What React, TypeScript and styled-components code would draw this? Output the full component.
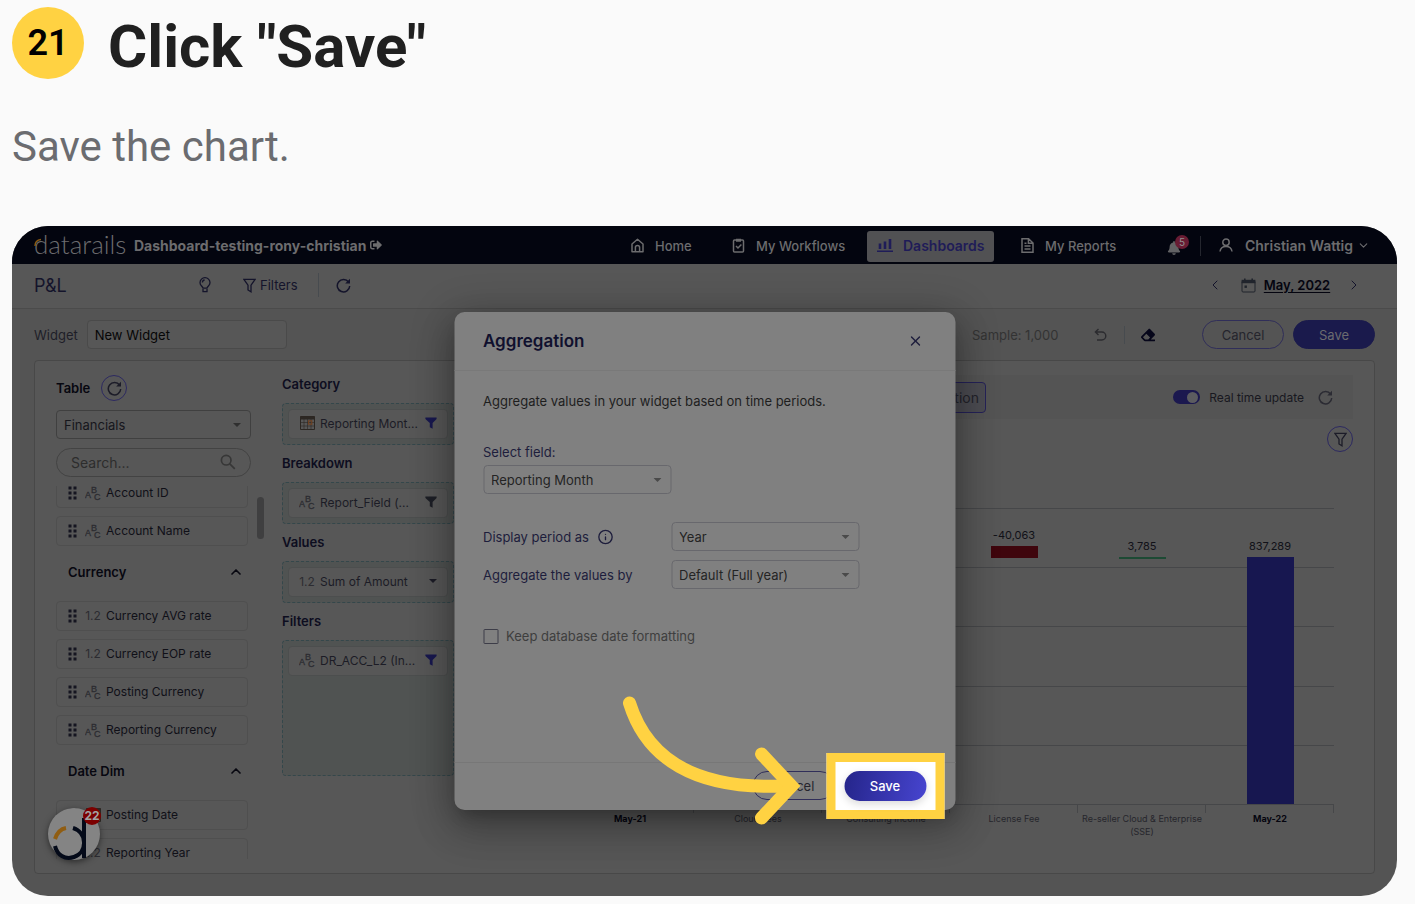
import React from "react";
import styled, { createGlobalStyle } from "styled-components";
import { FaSignOutAlt, FaBell, FaEraser } from "react-icons/fa";
import { ChevronDown, ChevronLeft, ChevronRight, ChevronUp, Info, X } from "lucide-react";

const yellow = "#ffd242";
const ink = "#14142b";
const muted = "#2b2b33";
const violet = "#18184f";

const GlobalStyle = createGlobalStyle`
  * { box-sizing: border-box; }
  body { margin: 0; background: #fafafa; font-family: Inter, "Liberation Sans", sans-serif; }
  button, input, select { font-family: inherit; margin: 0; }
  svg { display: block; flex: none; }
`;

/* ---------- article ---------- */

const Page = styled.main`
  padding: 7px 18px 8px 12px;
`;

const StepHeader = styled.header`
  display: flex;
  align-items: center;
  gap: 24px;
  height: 72px;
  font-family: Roboto, sans-serif;
`;

const StepNumber = styled.span`
  display: flex;
  align-items: center;
  justify-content: center;
  width: 72px;
  height: 72px;
  border-radius: 50%;
  background: ${yellow};
  color: #000;
  font-size: 36px;
  font-weight: 600;
`;

const StepTitle = styled.h1`
  margin: 8px 0 0;
  font-size: 60px;
  line-height: 72px;
  font-weight: 700;
  color: #202020;
`;

const StepText = styled.p`
  margin: 44px 0 55px;
  font-family: Roboto, sans-serif;
  font-size: 42px;
  line-height: 48px;
  color: #6b6c70;
`;

const Frame = styled.section`
  position: relative;
  overflow: hidden;
  border-radius: 36px;
  background: #545454;
`;

/* ---------- navigation ---------- */

const NavBar = styled.nav`
  display: flex;
  align-items: center;
  height: 38px;
  padding: 2px 27px 0 22px;
  background: #03050f;
  color: #6c6c6e;
`;

const Brand = styled.span`
  position: relative;
  width: 100px;
  padding-bottom: 5px;
  font-family: Lato, sans-serif;
  font-size: 26px;
  font-weight: 300;
  line-height: 30px;
`;

const BrandArc = styled.svg`
  position: absolute;
  left: 0;
  top: 9px;
`;

const Account = styled.a`
  display: flex;
  align-items: center;
  gap: 4px;
  margin-right: auto;
  padding-bottom: 2px;
  color: inherit;
  font-size: 14px;
  font-weight: 700;
  text-decoration: none;
  white-space: nowrap;
`;

const NavLink = styled.a<{ $width: number; $active?: boolean; $inset?: number }>`
  display: flex;
  align-items: center;
  gap: 10px;
  width: ${(p) => p.$width}px;
  height: 31px;
  padding: 0 0 1px ${(p) => p.$inset ?? 10}px;
  border-radius: 3px;
  font-size: ${(p) => (p.$active ? 14 : 13)}px;
  font-weight: ${(p) => (p.$active ? 600 : 500)};
  color: ${(p) => (p.$active ? "#1f1c58" : "inherit")};
  background: ${(p) => (p.$active ? "#515153" : "transparent")};
  text-decoration: none;
  white-space: nowrap;
`;

const BellButton = styled.button`
  position: relative;
  width: 34px;
  height: 20px;
  padding: 3px 0 0;
  border: 0;
  border-right: 1px solid #24262e;
  background: none;
  color: #626264;
`;

const BellBadge = styled.span`
  position: absolute;
  left: 8px;
  top: -1px;
  width: 14px;
  height: 14px;
  border-radius: 50%;
  background: #681c33;
  color: #909090;
  font-size: 10px;
  line-height: 14px;
  text-align: center;
`;

const UserButton = styled.button`
  display: flex;
  align-items: center;
  width: 169px;
  padding: 0 0 2px 18px;
  border: 0;
  background: none;
  color: inherit;
  font-size: 14px;
  font-weight: 600;
  white-space: nowrap;

  span { flex: 1; padding-left: 8px; text-align: center; }
`;

/* ---------- sub bar ---------- */

const SubBar = styled.div`
  display: flex;
  align-items: center;
  height: 45px;
  padding: 0 35px 2px 22px;
  border-bottom: 1px solid #4b4b4b;
  background: #575757;
  color: ${ink};
`;

const PageName = styled.h2`
  width: 165px;
  margin: 0;
  font-size: 18px;
  font-weight: 400;
`;

const PlainButton = styled.button`
  display: flex;
  align-items: center;
  gap: 4px;
  padding: 0;
  border: 0;
  background: none;
  color: inherit;
  font-size: 13px;
  white-space: nowrap;
`;

const FilterButton = styled(PlainButton)`
  margin: 0 19px 0 32px;
  width: 56px;
`;

const Divider = styled.span<{ $gap: number; $tall?: boolean }>`
  width: 1px;
  height: ${(p) => (p.$tall ? 24 : 18)}px;
  margin-right: ${(p) => p.$gap}px;
  background: #474b4f;
`;

const MonthPicker = styled.div`
  display: flex;
  align-items: center;
  margin-left: auto;
`;

const MonthIcon = styled.span`
  margin-left: 18px;
`;

const MonthLabel = styled.button`
  width: 82px;
  padding: 0;
  border: 0;
  background: none;
  color: #04040f;
  font-size: 13px;
  font-weight: 600;
  text-decoration: underline;
  text-underline-offset: 2px;
  white-space: nowrap;
`;

const NextMonth = styled(PlainButton)`
  margin-left: 8px;
`;

/* ---------- widget bar ---------- */

const WidgetBar = styled.div`
  display: flex;
  align-items: center;
  height: 51px;
  padding: 0 22px;
  color: #1e1e28;
  font-size: 13px;
`;

const WidgetName = styled.label`
  display: flex;
  align-items: center;
  gap: 9px;
  margin-right: auto;
`;

const TextInput = styled.input`
  width: 200px;
  height: 29px;
  padding: 0 7px;
  border: 1px solid #4a4a4a;
  border-radius: 4px;
  background: #575757;
  color: #060606;
  font-size: 13px;
`;

const Sample = styled.span`
  width: 122px;
  color: #333;
  font-size: 13px;
`;

const UndoButton = styled(PlainButton)`
  margin-right: 17px;
`;

const PillButton = styled.button<{ $filled?: boolean }>`
  width: 82px;
  height: 29px;
  padding: 0;
  border: 1px solid ${(p) => (p.$filled ? "#1a1a4c" : "#302e59")};
  border-radius: 15px;
  background: ${(p) => (p.$filled ? "#1a1a4c" : "transparent")};
  color: ${(p) => (p.$filled ? "#6b6b6f" : "#25252d")};
  font-size: 13px;
`;

const ToolbarActions = styled.div`
  display: flex;
  gap: 9px;
  margin-left: 47px;
`;

/* ---------- editor ---------- */

const Editor = styled.div`
  display: flex;
  height: 514px;
  margin: 0 22px 22px;
  padding: 14px 21px;
  border: 1px solid #484848;
  border-radius: 4px;
  background: #575757;
`;

const FieldColumn = styled.aside`
  display: flex;
  flex-direction: column;
  gap: 9px;
  width: 226px;
`;

const ColumnHead = styled.div`
  display: flex;
  align-items: center;
  gap: 11px;
  height: 26px;
  color: #070710;
  font-size: 13px;
  font-weight: 600;
`;

const RoundButton = styled.button`
  display: flex;
  align-items: center;
  justify-content: center;
  width: 26px;
  height: 26px;
  padding: 0;
  border: 1px solid #2c2960;
  border-radius: 50%;
  background: none;
  color: #1c1c28;
`;

const SelectBox = styled.span<{ $width: number; $light?: boolean }>`
  display: grid;
  align-items: center;
  width: ${(p) => p.$width}px;
  height: 29px;
  color: ${(p) => (p.$light ? "#4a4a4a" : "#2f2f2f")};

  select, svg { grid-area: 1 / 1; }
  svg { justify-self: end; margin-right: 10px; pointer-events: none; }
  select {
    appearance: none;
    width: 100%;
    height: 29px;
    padding: 0 7px;
    border: 1px solid ${(p) => (p.$light ? "#68686d" : "#404040")};
    border-radius: 4px;
    background: transparent;
    color: ${(p) => (p.$light ? "#242424" : "#16161c")};
    font-size: 13px;
  }
`;

const SearchBox = styled.label`
  display: flex;
  align-items: center;
  width: 195px;
  height: 29px;
  padding: 0 14px;
  border: 1px solid #434343;
  border-radius: 15px;
  color: #373737;

  input {
    flex: 1;
    min-width: 0;
    padding: 0;
    border: 0;
    outline: 0;
    background: none;
    color: #222;
    font-size: 14px;
  }
  input::placeholder { color: #2d2d2d; opacity: 1; }
`;

const FieldScroller = styled.div`
  display: flex;
  align-items: flex-start;
  gap: 9px;
  height: 374px;
  overflow: hidden;
`;

const FieldList = styled.div`
  width: 192px;
  margin-top: -8px;
`;

const ScrollThumb = styled.span`
  width: 7px;
  height: 42px;
  margin-top: 11px;
  border-radius: 4px;
  background: #3f3f40;
`;

const FieldGroup = styled.ul`
  display: flex;
  flex-direction: column;
  gap: 8px;
  margin: 0;
  padding: 0;
  list-style: none;
`;

const FieldItem = styled.li`
  display: flex;
  align-items: center;
  height: 30px;
  padding-left: 11px;
  border: 1px solid #4f4f4f;
  border-radius: 4px;
  color: #101018;
  font-size: 12px;
  line-height: 14px;
  white-space: nowrap;
`;

const GroupHeader = styled.button`
  display: flex;
  align-items: center;
  justify-content: space-between;
  width: 100%;
  height: 55px;
  padding: 0 4px 3px 12px;
  border: 0;
  background: none;
  color: #070710;
  font-size: 13px;
  font-weight: 600;
`;

const TypeSlot = styled.span`
  display: flex;
  justify-content: center;
  width: 16px;
  margin: 0 5px 0 8px;
  color: #2c2c31;
`;

const ZoneColumn = styled.div`
  width: 172px;
  margin-top: -9px;
`;

const ZoneTitle = styled.h3`
  height: 37px;
  margin: 0;
  color: #0d0d1f;
  font-size: 13px;
  font-weight: 600;
  line-height: 37px;
`;

const DropZone = styled.div<{ $tall?: boolean }>`
  height: ${(p) => (p.$tall ? 136 : 42)}px;
  padding: 5px;
  border: 1px dashed #34474b;
  border-radius: 4px;
  background: #505352;
`;

const Chip = styled.div`
  display: flex;
  align-items: center;
  height: 30px;
  padding: 0 10px 2px 2px;
  border: 1px solid #4c4e4e;
  border-radius: 4px;
  background: #575757;
  color: #1c1c26;
  font-size: 12px;
  white-space: nowrap;

  > :last-child { margin-left: auto; }
`;

const ChartColumn = styled.div`
  flex: 1;
  min-width: 0;
  margin-left: 22px;
`;

const ChartBar = styled.div`
  display: flex;
  align-items: center;
  height: 44px;
  padding-right: 20px;
  background: #545454;
  color: ${muted};
`;

const AggregationButton = styled.button`
  width: 110px;
  height: 31px;
  margin: 0 auto 0 400px;
  border: 1px solid #252258;
  border-radius: 4px;
  background: #4c4c52;
  color: #23232b;
  font-size: 14px;
  text-align: right;
`;

const SwitchLabel = styled.label`
  display: flex;
  align-items: center;
  gap: 9px;
  margin-right: 14px;
  color: #181820;
  font-size: 12px;

  input {
    appearance: none;
    display: flex;
    align-items: center;
    justify-content: flex-end;
    width: 27px;
    height: 14px;
    padding: 0 2px;
    border-radius: 7px;
    background: #1b184f;
  }
  input::before {
    content: "";
    width: 11px;
    height: 11px;
    border-radius: 50%;
    background: #5c5c60;
  }
`;

const ChartFilter = styled.div`
  display: flex;
  justify-content: flex-end;
  margin: 7px 0 56px;
`;

const Plot = styled.div`
  display: grid;
  height: 297px;
  margin-right: 19px;
`;

const GridLines = styled.div`
  grid-area: 1 / 1;
  display: flex;
  flex-direction: column;
  justify-content: space-between;

  span { height: 1px; background: #464749; }
`;

const Bars = styled.div`
  grid-area: 1 / 1;
  display: grid;
  grid-template-columns: repeat(6, 1fr);
  padding-left: 90px;
`;

const BarSlot = styled.div<{ $base: number }>`
  display: flex;
  flex-direction: column;
  align-items: center;
  justify-content: flex-end;
  gap: 4px;
  padding-bottom: ${(p) => p.$base}px;
  color: #111118;
  font-size: 11px;
  line-height: 14px;
`;

const Bar = styled.span<{ $height: number; $color: string }>`
  width: 47px;
  height: ${(p) => p.$height}px;
  background: ${(p) => p.$color};
`;

const AxisLabels = styled.div`
  display: grid;
  grid-template-columns: repeat(6, 1fr);
  margin-right: 19px;
  padding-left: 90px;
`;

const AxisLabel = styled.span<{ $strong?: boolean }>`
  height: 34px;
  padding-top: 7px;
  background: linear-gradient(#464749, #464749) right top / 1px 8px no-repeat;
  color: ${(p) => (p.$strong ? "#05050f" : "#26262c")};
  font-size: 9px;
  font-weight: ${(p) => (p.$strong ? 700 : 400)};
  line-height: 13px;
  text-align: center;
`;

/* ---------- dialog ---------- */

const Dialog = styled.div`
  position: absolute;
  left: 50%;
  top: 86px;
  width: 501px;
  transform: translateX(-50%);
  border-radius: 10px;
  background: #808080;
  box-shadow: 0 11px 15px -7px rgba(0, 0, 0, 0.2), 0 20px 38px 3px rgba(0, 0, 0, 0.16),
    0 6px 40px 4px rgba(0, 0, 0, 0.24);
  color: #1d1d3c;
  font-size: 13px;
`;

const DialogHead = styled.header`
  display: flex;
  align-items: center;
  justify-content: space-between;
  height: 59px;
  padding: 0 32px 0 29px;
  border-bottom: 1px solid #797979;

  h2 { margin: 0; font-size: 17px; font-weight: 600; color: #10102e; }
`;

const DialogBody = styled.div`
  min-height: 391px;
  padding: 20px 29px;

  p { margin: 0 0 32px; color: #1e1e1e; line-height: 20px; }
`;

const StackedField = styled.label`
  display: flex;
  flex-direction: column;
  gap: 4px;
  margin-bottom: 28px;
  line-height: 18px;
`;

const InlineField = styled.label`
  display: flex;
  align-items: center;
  height: 29px;
  margin-bottom: 9px;

  > span:first-child {
    display: flex;
    align-items: center;
    gap: 9px;
    width: 188px;
  }
`;

const CheckField = styled.label`
  display: flex;
  align-items: center;
  gap: 8px;
  margin-top: 38px;
  color: #3e3e3e;
  line-height: 18px;

  input {
    appearance: none;
    width: 15px;
    height: 15px;
    border: 1px solid #3d3d48;
    border-radius: 1px;
  }
`;

const DialogFoot = styled.footer`
  display: flex;
  align-items: center;
  justify-content: flex-end;
  height: 48px;
  padding: 0 11px 2px 0;
  border-top: 1px solid #777;
`;

const Highlight = styled.span`
  z-index: 1;
  margin: -9px 0 -9px -8px;
  padding: 9px;
  border: 9px solid ${yellow};
  background: #fff;
`;

const PrimaryButton = styled.button`
  display: block;
  width: 82px;
  height: 30px;
  padding: 0;
  border: 0;
  border-radius: 15px;
  background: linear-gradient(100deg, #25258a, #4745d0);
  box-shadow: 0 3px 8px rgba(0, 0, 0, 0.15);
  color: #fff;
  font-size: 13px;
  font-weight: 500;
`;

const Arrow = styled.svg`
  position: absolute;
  left: 165px;
  top: 380px;
  z-index: 2;
  pointer-events: none;
`;

/* ---------- chat launcher ---------- */

const ChatButton = styled.button`
  position: absolute;
  left: 36px;
  bottom: 36px;
  width: 52px;
  height: 52px;
  padding: 0;
  border: 0;
  border-radius: 50%;
  background: #848484;
  box-shadow: 0 2px 6px rgba(0, 0, 0, 0.5);
`;

const ChatBadge = styled.span`
  position: absolute;
  right: -1px;
  top: -1px;
  width: 18px;
  height: 18px;
  border-radius: 50%;
  background: #7c0000;
  color: #a3a3a3;
  font-size: 12px;
  font-weight: 700;
  line-height: 18px;
  text-align: center;
`;

/* ---------- icons ---------- */

const line = { fill: "none", stroke: "currentColor", strokeWidth: 1.5 } as const;

const HomeIcon = () => (
  <svg width="15" height="15" viewBox="0 0 15 15" {...line}>
    <path d="M2 6 7.5 1.3 13 6v7.7H2zM5.4 13.5V9.6a2.1 2.1 0 0 1 4.2 0v3.9" strokeLinejoin="round" />
  </svg>
);

const WorkflowIcon = () => (
  <svg width="15" height="15" viewBox="0 0 15 15" {...line}>
    <rect x="2.5" y="2" width="10" height="12" rx="1" />
    <path d="M5 2.2h5" strokeWidth="3" />
    <path d="m5 8 2 2 3.4-3.6" />
  </svg>
);

const DashboardIcon = () => (
  <svg width="16" height="15" viewBox="0 0 16 15" {...line} strokeWidth="2.6">
    <path d="M3 5.5V11M8 3.5V11M13 1V11" />
    <path d="M0 13.2h16" strokeWidth="1.6" />
  </svg>
);

const ReportIcon = () => (
  <svg width="15" height="15" viewBox="0 0 15 15" {...line}>
    <path d="M2 .8h6.6L13 5v9.2H2zM8.4 1v4.2H13M4.5 8h6M4.5 11h6M4.5 5.2h2" />
  </svg>
);

const UserIcon = () => (
  <svg width="14" height="14" viewBox="0 0 14 14" {...line}>
    <circle cx="7" cy="4.2" r="3.2" />
    <path d="M1 13.5c.4-3.2 2.4-5 6-5s5.6 1.8 6 5" />
  </svg>
);

const BulbIcon = () => (
  <svg width="12" height="16" viewBox="0 0 12 16" {...line}>
    <path d="M4 11.2C4 9.5 1 8.6 1 5.7a5 5 0 0 1 10 0c0 2.9-3 3.8-3 5.5zM4 12v2.7h4V12M3.4 5.5C3.4 4.2 4.3 3.2 5.6 3" strokeWidth="1.3" />
  </svg>
);

const FunnelIcon = () => (
  <svg width="13" height="15" viewBox="0 0 13 15" {...line} strokeWidth="1.3">
    <path d="M.9 1.3h11.2L8 7.2v6.6L5 12V7.2z" />
  </svg>
);

const SolidFunnel = ({ color }: { color: string }) => (
  <svg width="12" height="12" viewBox="0 0 12 12" fill={color}>
    <path d="M.4.5h11.2v1.6L7.6 6v5.7L4.8 10.3V6L.4 2.1z" />
  </svg>
);

const ReloadIcon = () => (
  <svg width="15" height="15" viewBox="0 0 15 15" {...line}>
    <path d="M12.6 4.2A6.2 6.2 0 1 0 13.7 8" />
    <path d="M14 .8v4.8H9.2z" fill="currentColor" stroke="none" />
  </svg>
);

const CalendarIcon = () => (
  <svg width="15" height="15" viewBox="0 0 15 15" fill="none" stroke="#20242c">
    <rect x="1" y="3" width="13" height="11" rx="1" />
    <path d="M.6 3.5h13.8" strokeWidth="3.4" />
    <path d="M3.8.4v3M11.2.4v3" strokeWidth="1.6" />
    <rect x="3.5" y="7.5" width="2.4" height="2.4" fill="#20242c" stroke="none" />
  </svg>
);

const UndoIcon = () => (
  <svg width="13" height="13" viewBox="0 0 13 13" {...line} strokeWidth="1.4" color="#2b2b2f">
    <path d="M4.5 1 1.4 4l3.1 3M1.6 4h6.2a4 4 0 0 1 0 8H3" />
  </svg>
);

const SearchIcon = () => (
  <svg width="16" height="16" viewBox="0 0 16 16" {...line} strokeWidth="1.7">
    <circle cx="6.2" cy="6.2" r="4.8" />
    <path d="m9.8 9.8 5 5" />
  </svg>
);

const CaretIcon = () => (
  <svg width="8" height="4" viewBox="0 0 8 4" fill="currentColor">
    <path d="M0 0h8L4 4z" />
  </svg>
);

const DragIcon = () => (
  <svg width="9" height="14" viewBox="0 0 9 14" fill="#151520">
    {[0.5, 5.5, 10.5].map((y) => (
      <path key={y} d={`M.5 ${y}h3v3h-3zM5.5 ${y}h3v3h-3z`} />
    ))}
  </svg>
);

const TextTypeIcon = () => (
  <svg width="16" height="20" viewBox="0 -2 16 20" fill="currentColor" stroke="currentColor" strokeWidth=".3" fontFamily="Liberation Sans, sans-serif" fontSize="9">
    <text x="0" y="13">A</text>
    <text x="6" y="8">B</text>
    <text x="9" y="15">C</text>
  </svg>
);

const DateTypeIcon = () => (
  <svg width="15" height="14" viewBox="0 0 15 14" fill="none" stroke="#2c2723">
    <path d="M.5.5h14v13H.5z" />
    <path d="M.5 2h14" strokeWidth="3" />
    <path d="M4 3v10M7.5 3v10M11 3v10M1 6.5h13M1 10h13" strokeWidth=".6" />
    <rect x="8.6" y="4.8" width="3.2" height="3.4" stroke="#74401d" />
  </svg>
);

const NumberType = styled.span`
  font-size: 12px;
`;

const TypeIcon = ({ kind }: { kind: string }) => (
  <TypeSlot>
    {kind === "text" ? <TextTypeIcon /> : kind === "date" ? <DateTypeIcon /> : <NumberType>1.2</NumberType>}
  </TypeSlot>
);

const ChatLogo = () => (
  <svg width="52" height="52" viewBox="0 0 52 52" fill="none" strokeWidth="4">
    <path d="M7 31C9 25 12 21 18 20" stroke="#905d12" />
    <path d="M25 20C39 24 40 44 26 49C17 52 9 47 7 38" stroke="#040a19" />
    <path d="M36 10v40" stroke="#040a19" />
  </svg>
);

/* ---------- content ---------- */

const groups = [
  { title: "", fields: [["text", "Account ID"], ["text", "Account Name"]] },
  {
    title: "Currency",
    fields: [
      ["number", "Currency AVG rate"],
      ["number", "Currency EOP rate"],
      ["text", "Posting Currency"],
      ["text", "Reporting Currency"],
    ],
  },
  { title: "Date Dim", fields: [["date", "Posting Date"], ["number", "Reporting Year"]] },
];

const zones = [
  { title: "Category", kind: "date", text: "Reporting Mont...", end: <SolidFunnel color={violet} /> },
  { title: "Breakdown", kind: "text", text: "Report_Field (...", end: <SolidFunnel color="#1d1f26" /> },
  { title: "Values", kind: "number", text: "Sum of Amount", end: <CaretIcon /> },
  { title: "Filters", kind: "text", text: "DR_ACC_L2 (In...", end: <SolidFunnel color={violet} />, tall: true },
];

const series = [
  { name: "May-21", strong: true },
  { name: "Cloud Fees" },
  { name: "Consulting Income" },
  { name: "License Fee", value: "-40,063", height: 12, base: 247, color: "#3f060d" },
  { name: "Re-seller Cloud & Enterprise (SSE)", value: "3,785", height: 2, base: 246, color: "#1d4a34" },
  { name: "May-22", strong: true, value: "837,289", height: 247, base: 1, color: "#171750" },
];

const Picker = ({ value, width, light }: { value: string; width: number; light?: boolean }) => (
  <SelectBox $width={width} $light={light}>
    <select defaultValue={value} aria-label={value}>
      <option>{value}</option>
    </select>
    <CaretIcon />
  </SelectBox>
);

const Navigation = () => (
  <NavBar>
    <Brand>
      datarails
      <BrandArc width="8" height="10" viewBox="0 0 8 10" fill="none" stroke="#8a5a12" strokeWidth="1.5">
        <path d="M1 8C1 4 3 2 7 1.5" />
      </BrandArc>
    </Brand>
    <Account href="#account">
      Dashboard-testing-rony-christian <FaSignOutAlt size={12} />
    </Account>
    <NavLink href="#home" $width={101}><HomeIcon />Home</NavLink>
    <NavLink href="#workflows" $width={146}><WorkflowIcon />My Workflows</NavLink>
    <NavLink href="#dashboards" $width={127} $active><DashboardIcon />Dashboards</NavLink>
    <NavLink href="#reports" $width={173} $inset={26}><ReportIcon />My Reports</NavLink>
    <BellButton aria-label="Notifications">
      <FaBell size={14} />
      <BellBadge>5</BellBadge>
    </BellButton>
    <UserButton>
      <UserIcon />
      <span>Christian Wattig</span>
      <ChevronDown size={13} />
    </UserButton>
  </NavBar>
);

const FieldPanel = () => (
  <FieldColumn>
    <ColumnHead>
      Table
      <RoundButton aria-label="Reload table"><ReloadIcon /></RoundButton>
    </ColumnHead>
    <Picker value="Financials" width={195} />
    <SearchBox>
      <input placeholder="Search..." aria-label="Search fields" />
      <SearchIcon />
    </SearchBox>
    <FieldScroller>
      <FieldList>
        {groups.map((group) => (
          <div key={group.title}>
            {group.title && (
              <GroupHeader>
                {group.title}
                <ChevronUp size={16} strokeWidth={2.5} />
              </GroupHeader>
            )}
            <FieldGroup>
              {group.fields.map(([kind, name]) => (
                <FieldItem key={name}>
                  <DragIcon />
                  <TypeIcon kind={kind} />
                  {name}
                </FieldItem>
              ))}
            </FieldGroup>
          </div>
        ))}
      </FieldList>
      <ScrollThumb />
    </FieldScroller>
  </FieldColumn>
);

const Chart = () => (
  <ChartColumn>
    <ChartBar>
      <AggregationButton>Aggregation</AggregationButton>
      <SwitchLabel>
        <input type="checkbox" role="switch" defaultChecked />
        Real time update
      </SwitchLabel>
      <PlainButton aria-label="Reload chart"><ReloadIcon /></PlainButton>
    </ChartBar>
    <ChartFilter>
      <RoundButton aria-label="Filter chart"><FunnelIcon /></RoundButton>
    </ChartFilter>
    <Plot>
      <GridLines>
        {[5, 4, 3, 2, 1, 0].map((n) => <span key={n} />)}
      </GridLines>
      <Bars>
        {series.map((s) => (
          <BarSlot key={s.name} $base={s.base ?? 0}>
            {s.value}
            {s.height && <Bar $height={s.height} $color={s.color} />}
          </BarSlot>
        ))}
      </Bars>
    </Plot>
    <AxisLabels>
      {series.map((s) => <AxisLabel key={s.name} $strong={s.strong}>{s.name}</AxisLabel>)}
    </AxisLabels>
  </ChartColumn>
);

const AggregationDialog = () => (
  <Dialog role="dialog" aria-label="Aggregation">
    <DialogHead>
      <h2>Aggregation</h2>
      <PlainButton aria-label="Close"><X size={16} strokeWidth={2} /></PlainButton>
    </DialogHead>
    <DialogBody>
      <p>Aggregate values in your widget based on time periods.</p>
      <StackedField>
        Select field:
        <Picker value="Reporting Month" width={188} light />
      </StackedField>
      <InlineField>
        <span>Display period as <Info size={16} strokeWidth={2} /></span>
        <Picker value="Year" width={188} light />
      </InlineField>
      <InlineField>
        <span>Aggregate the values by</span>
        <Picker value="Default (Full year)" width={188} light />
      </InlineField>
      <CheckField>
        <input type="checkbox" />
        Keep database date formatting
      </CheckField>
    </DialogBody>
    <DialogFoot>
      <PillButton>Cancel</PillButton>
      <Highlight><PrimaryButton>Save</PrimaryButton></Highlight>
    </DialogFoot>
    <Arrow width="190" height="140" viewBox="0 0 190 140" fill="none" stroke={yellow} strokeWidth="13" strokeLinecap="round">
      <path d="M10 11C27 66 75 98 164 94" />
      <path d="M142 62 172 94 142 126" />
    </Arrow>
  </Dialog>
);

export default function App() {
  return (
    <Page>
      <GlobalStyle />
      <StepHeader>
        <StepNumber>21</StepNumber>
        <StepTitle>Click "Save"</StepTitle>
      </StepHeader>
      <StepText>Save the chart.</StepText>
      <Frame>
        <Navigation />
        <SubBar>
          <PageName>P&amp;L</PageName>
          <PlainButton aria-label="Insights"><BulbIcon /></PlainButton>
          <FilterButton><FunnelIcon />Filters</FilterButton>
          <Divider $gap={17} $tall />
          <PlainButton aria-label="Reload"><ReloadIcon /></PlainButton>
          <MonthPicker>
            <PlainButton aria-label="Previous month"><ChevronLeft size={16} strokeWidth={1.5} /></PlainButton>
            <MonthIcon><CalendarIcon /></MonthIcon>
            <MonthLabel>May, 2022</MonthLabel>
            <NextMonth aria-label="Next month"><ChevronRight size={16} strokeWidth={1.5} /></NextMonth>
          </MonthPicker>
        </SubBar>
        <WidgetBar>
          <WidgetName>
            Widget
            <TextInput defaultValue="New Widget" />
          </WidgetName>
          <Sample>Sample: 1,000</Sample>
          <UndoButton aria-label="Undo"><UndoIcon /></UndoButton>
          <Divider $gap={16} />
          <PlainButton aria-label="Clear"><FaEraser size={14} color="#06061a" /></PlainButton>
          <ToolbarActions>
            <PillButton>Cancel</PillButton>
            <PillButton $filled>Save</PillButton>
          </ToolbarActions>
        </WidgetBar>
        <Editor>
          <FieldPanel />
          <ZoneColumn>
            {zones.map((z) => (
              <section key={z.title}>
                <ZoneTitle>{z.title}</ZoneTitle>
                <DropZone $tall={z.tall}>
                  <Chip>
                    <TypeIcon kind={z.kind} />
                    {z.text}
                    {z.end}
                  </Chip>
                </DropZone>
              </section>
            ))}
          </ZoneColumn>
          <Chart />
        </Editor>
        <AggregationDialog />
        <ChatButton aria-label="Open chat">
          <ChatLogo />
          <ChatBadge>22</ChatBadge>
        </ChatButton>
      </Frame>
    </Page>
  );
}
